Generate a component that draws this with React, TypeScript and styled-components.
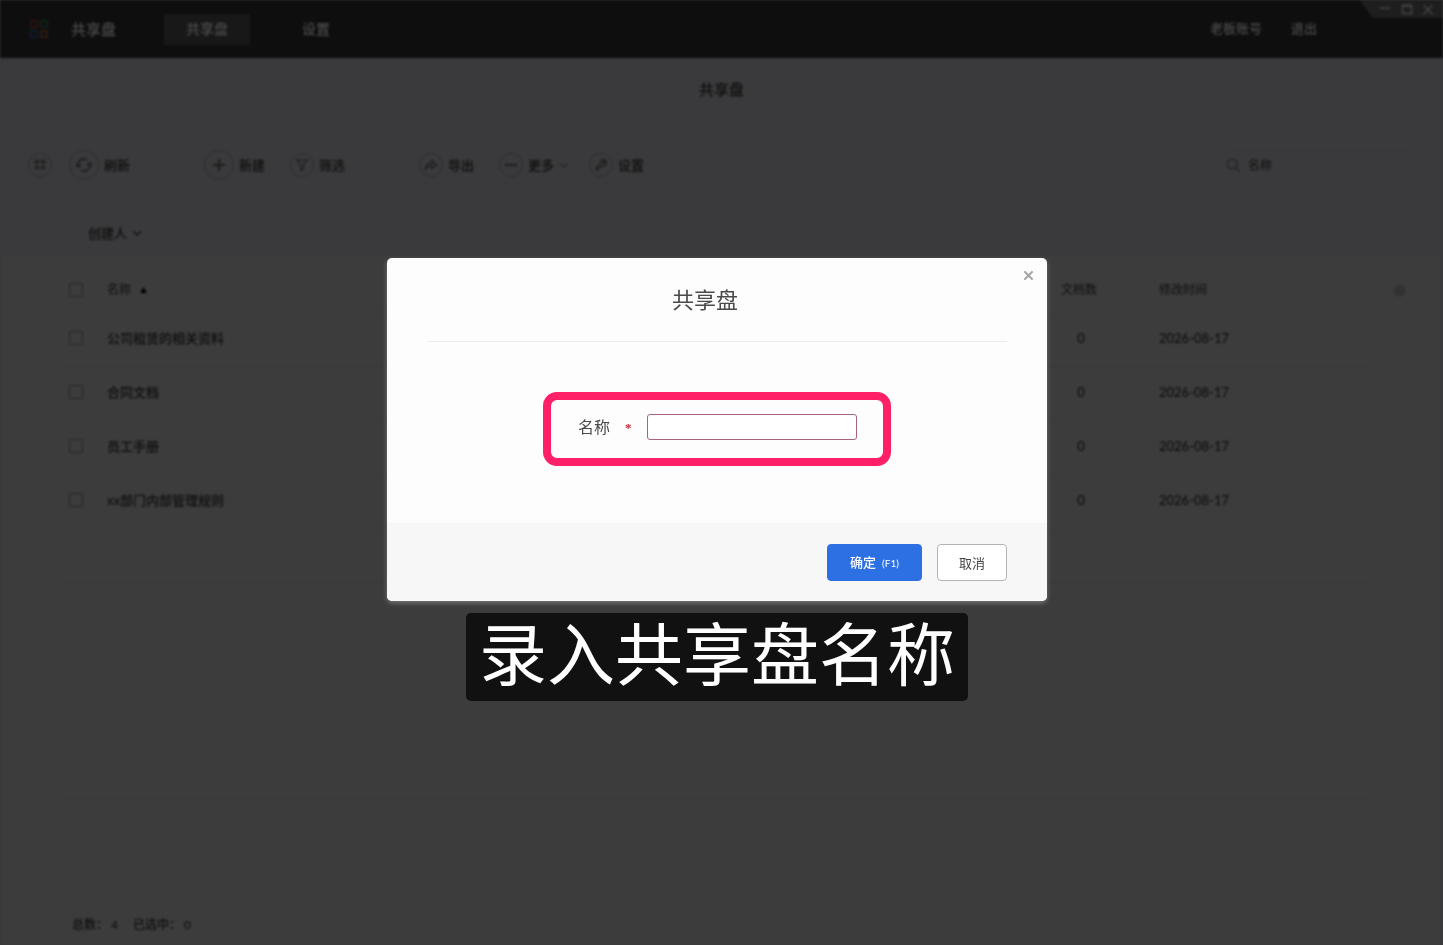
import React from "react";
import styled, { createGlobalStyle } from "styled-components";

const GlobalStyle = createGlobalStyle`
  *, *::before, *::after { box-sizing: border-box; }
  body {
    margin: 0;
    background: #3a3a3c;
    font-family: Lato, "Noto Sans CJK SC", sans-serif;
    font-size: 13px;
  }
  button, input { font: inherit; color: inherit; }
  button { margin: 0; padding: 0; border: 0; background: none; cursor: pointer; }
`;

const Page = styled.div`
  display: flex;
  flex-direction: column;
  min-height: 100vh;
  background: #3a3a3c;
  color: #0e0e0e;
  font-weight: 500;
  filter: blur(1px);
`;

const TopBar = styled.header`
  position: relative;
  display: flex;
  align-items: center;
  height: 58px;
  padding: 0 126px 0 30px;
  background: #0e0e0e;
  color: #4a4a4a;
`;

const Brand = styled.div`
  display: flex;
  align-items: center;
  gap: 23px;
  width: 134px;
  font-size: 15px;
  line-height: 20px;
`;

const Nav = styled.nav`
  display: flex;
  gap: 30px;
  flex: 1;
`;

const NavLink = styled.a<{ $active?: boolean }>`
  padding: 0 22px 1px;
  line-height: 30px;
  font-size: 14px;
  color: inherit;
  text-decoration: none;
  background: ${(p) => (p.$active ? "#181818" : "transparent")};
`;

const Account = styled.div`
  display: flex;
  gap: 29px;
  padding-bottom: 2px;
  line-height: 20px;
  a { color: inherit; text-decoration: none; }
`;

const WindowControls = styled.div`
  position: absolute;
  top: 0;
  right: 0;
  display: flex;
  align-items: center;
  justify-content: space-between;
  width: 84px;
  height: 18px;
  padding: 0 9px 0 20px;
  background: #1e1e1e;
  color: #444;
  clip-path: polygon(0 0, 100% 0, 100% 100%, 14px 100%);
  button { display: flex; }
`;

const PageTitle = styled.h1`
  margin: 0;
  padding-bottom: 2px;
  line-height: 62px;
  font-size: 15px;
  font-weight: 500;
  text-align: center;
`;

const Toolbar = styled.div`
  display: flex;
  align-items: center;
  gap: 74px;
  height: 86px;
  padding: 0 26px 0 28px;
`;

const ToolGroup = styled.div<{ $gap: number }>`
  display: flex;
  align-items: center;
  gap: ${(p) => p.$gap}px;
`;

const ToolButton = styled.button`
  display: flex;
  align-items: center;
  gap: 5px;
  line-height: 18px;
  white-space: nowrap;
`;

const Circle = styled.span<{ $large?: boolean }>`
  display: flex;
  align-items: center;
  justify-content: center;
  width: ${(p) => (p.$large ? 30 : 24)}px;
  height: ${(p) => (p.$large ? 30 : 24)}px;
  border: 1px solid #2c2c2c;
  border-radius: 50%;
  color: #1c1c1c;
`;

const Search = styled.label`
  display: flex;
  align-items: center;
  gap: 8px;
  width: 199px;
  height: 30px;
  margin-left: auto;
  padding: 0 7px;
  border: 1px solid #383838;
  border-radius: 15px;
  color: #222;
  input {
    flex: 1;
    min-width: 0;
    border: 0;
    padding: 0;
    outline: 0;
    background: none;
    font-size: 12px;
  }
  input::placeholder { color: #161616; opacity: 1; }
`;

const FilterBar = styled.div`
  display: flex;
  align-items: center;
  height: 48px;
  padding: 2px 88px 0;
`;

const Panel = styled.main`
  display: flex;
  flex: 1;
  flex-direction: column;
  margin: 0 3px;
  padding-top: 12px;
  background: #3c3c3c;
`;

const TableArea = styled.div`
  display: flex;
  align-items: flex-start;
  padding: 0 17px 0 61px;
`;

const Table = styled.table`
  flex: 1;
  table-layout: fixed;
  border-collapse: collapse;
  th, td {
    padding: 0;
    border-bottom: 1px solid #393939;
    text-align: left;
    font-weight: 500;
    line-height: 18px;
  }
  th { height: 44px; font-size: 12px; color: #161616; }
  td { height: 54px; padding-bottom: 2px; }
`;

const CheckCell = styled.col` width: 43px; `;
const CountCell = styled.col` width: 98px; `;
const DateCell = styled.col` width: 216px; `;

const Count = styled.span`
  display: block;
  width: 40px;
  text-align: center;
`;

const SortMark = styled.svg`
  margin-left: 9px;
  vertical-align: 1px;
`;

const Check = styled.input`
  display: block;
  width: 14px;
  height: 14px;
  margin: 0 0 0 5px;
  appearance: none;
  border: 1px solid #262626;
  border-radius: 1px;
`;

const GearButton = styled.button`
  display: flex;
  align-items: center;
  justify-content: center;
  width: 48px;
  height: 44px;
  color: #2a2a2a;
`;

const Divider = styled.div`
  height: 51px;
  margin: 0 65px 0 61px;
  border-bottom: 1px solid #393939;
`;

const StatusBar = styled.footer`
  display: flex;
  gap: 15px;
  padding: 0 69px;
  line-height: 42px;
  font-size: 12px;
`;

const Overlay = styled.div`
  position: fixed;
  inset: 0;
  display: flex;
  flex-direction: column;
  align-items: center;
  gap: 12px;
  padding: 258px 9px 0 0;
`;

const Dialog = styled.section`
  width: 660px;
  max-width: 100%;
  border-radius: 5px;
  overflow: hidden;
  background: #fdfdfd;
  color: #4a4a4a;
  box-shadow: 0 2px 5px rgba(255, 255, 255, 0.3);
`;

const DialogHeader = styled.header`
  display: flex;
  align-items: flex-start;
`;

const DialogTitle = styled.h2`
  flex: 1;
  margin: 0;
  line-height: 83px;
  font-size: 22px;
  font-weight: 400;
  text-align: center;
`;

const CloseButton = styled.button`
  display: flex;
  width: 24px;
  padding-top: 12px;
  color: #a2a2a2;
`;

const DialogBody = styled.form`
  display: flex;
  justify-content: center;
  margin: 0 40px;
  padding: 50px 0 57px;
  border-top: 1px solid #ebebeb;
`;

const Highlight = styled.div`
  display: flex;
  align-items: center;
  padding: 14px 26px 18px 27px;
  border: 8px solid #ff2068;
  border-radius: 14px;
  label { width: 47px; font-size: 16px; line-height: 26px; }
`;

const Required = styled.span`
  width: 22px;
  padding-top: 2px;
  color: #c02836;
  font: 700 13px/20px "Liberation Serif", serif;
`;

const NameInput = styled.input`
  width: 210px;
  height: 26px;
  padding: 0 6px;
  border: 1px solid #a8647c;
  border-radius: 3px;
  background: #fff;
  outline: 0;
`;

const DialogFooter = styled.footer`
  display: flex;
  justify-content: flex-end;
  gap: 15px;
  padding: 21px 40px 20px;
  background: #f7f7f7;
`;

const ActionButton = styled.button<{ $primary?: boolean }>`
  width: ${(p) => (p.$primary ? 95 : 70)}px;
  height: 37px;
  border: 1px solid ${(p) => (p.$primary ? "#2d70e4" : "#b4b4b4")};
  border-radius: 4px;
  background: ${(p) => (p.$primary ? "#2d70e4" : "#fff")};
  color: ${(p) => (p.$primary ? "#fff" : "#444")};
  font-weight: ${(p) => (p.$primary ? 500 : 400)};
  line-height: 18px;
  small { margin-left: 6px; font-weight: 400; font-size: 10px; }
`;

const Caption = styled.p`
  margin: 0;
  padding: 0 13px 12px;
  border-radius: 5px;
  background: #111;
  color: #fff;
  font-family: "Noto Sans CJK SC", sans-serif;
  font-size: 68px;
  line-height: 76px;
  white-space: nowrap;
`;

type IconProps = { size?: number; width?: number; children: React.ReactNode };
const Icon = ({ size = 16, width = 1.6, children }: IconProps) => (
  <svg width={size} height={size} viewBox="0 0 16 16" fill="none" stroke="currentColor" strokeWidth={width} aria-hidden="true">
    {children}
  </svg>
);

const Chevron = ({ faint }: { faint?: boolean }) => (
  <svg width="10" height="6" viewBox="0 0 10 6" fill="none" stroke={faint ? "#262626" : "#121212"} strokeWidth="1.3" aria-hidden="true">
    <path d="M1 1l4 4 4-4" />
  </svg>
);

const files = ["公司租赁的相关资料", "合同文档", "员工手册", "xx部门内部管理规则"];
const emptyRows = [0, 1, 2, 3, 4, 5];

export default function App() {
  return (
    <>
      <GlobalStyle />
      <Page>
        <TopBar>
          <Brand>
            <svg width="18" height="18" viewBox="0 0 18 18" fill="none" strokeWidth="1.5" aria-hidden="true">
              <rect x="1" y="1" width="6" height="6" stroke="#321412" />
              <rect x="11" y="1" width="6" height="6" stroke="#10281e" />
              <rect x="1" y="11" width="6" height="6" stroke="#121e34" />
              <rect x="11" y="11" width="6" height="6" stroke="#38200e" />
            </svg>
            <span>共享盘</span>
          </Brand>
          <Nav>
            <NavLink href="#disk" $active>共享盘</NavLink>
            <NavLink href="#settings">设置</NavLink>
          </Nav>
          <Account>
            <a href="#account">老板账号</a>
            <a href="#logout">退出</a>
          </Account>
          <WindowControls>
            <button aria-label="最小化"><Icon size={12} width={2}><path d="M1 7h14" /></Icon></button>
            <button aria-label="最大化"><Icon size={12} width={2}><path d="M2 3h12v11H2zM2 4h12" /></Icon></button>
            <button aria-label="关闭窗口"><Icon size={12} width={2}><path d="M2 3l12 12M14 3L2 15" /></Icon></button>
          </WindowControls>
        </TopBar>

        <PageTitle>共享盘</PageTitle>

        <Toolbar>
          <ToolGroup $gap={17}>
            <ToolButton aria-label="视图">
              <Circle>
                <Icon size={14} width={1.5}><path d="M4.500 1v13M11.500 1v13M1 4h14M1 11h14" /></Icon>
              </Circle>
            </ToolButton>
            <ToolButton>
              <Circle $large>
                <Icon><path d="M2 9a6 6 0 0 1 9-6.200M14 7a6 6 0 0 1-9 6.200" /><path d="M0 7l2 3 3-2M16 9l-2-3-3 2" /></Icon>
              </Circle>
              刷新
            </ToolButton>
          </ToolGroup>
          <ToolGroup $gap={25}>
            <ToolButton>
              <Circle $large><Icon width={2}><path d="M8 2v12M2 8h12" /></Icon></Circle>
              新建
            </ToolButton>
            <ToolButton>
              <Circle><Icon size={14} width={1.4}><path d="M2 2h12L9.500 8v6h-3V8z" /></Icon></Circle>
              筛选
            </ToolButton>
          </ToolGroup>
          <ToolGroup $gap={25}>
            <ToolButton>
              <Circle><Icon size={14} width={1.5}><path d="M1.500 13c0-5 3-7 7.500-7V3l5.500 5L9 12V9c-4 0-5.500 1-7.500 4z" /></Icon></Circle>
              导出
            </ToolButton>
            <ToolGroup $gap={20}>
              <ToolButton>
                <Circle><Icon size={14} width={2.6}><path d="M1 8h4M6 8h4M11 8h4" /></Icon></Circle>
                更多
                <Chevron faint />
              </ToolButton>
              <ToolButton>
                <Circle><Icon size={14} width={1.5}><path d="M13 2.500a4 4 0 0 0-6 4.500L2 12l2 2 5-5a4 4 0 0 0 5-5l-3 2-1-1z" /></Icon></Circle>
                设置
              </ToolButton>
            </ToolGroup>
          </ToolGroup>
          <Search>
            <Icon size={14} width={1.5}><circle cx="7" cy="7" r="5.500" /><path d="M11 11l4.500 4.500" /></Icon>
            <input type="search" placeholder="名称" aria-label="搜索名称" />
          </Search>
        </Toolbar>

        <FilterBar>
          <ToolButton>创建人<Chevron /></ToolButton>
        </FilterBar>

        <Panel>
          <TableArea>
            <Table>
              <colgroup><CheckCell /><col /><CountCell /><DateCell /></colgroup>
              <thead>
                <tr>
                  <th><Check type="checkbox" aria-label="全选" /></th>
                  <th>
                    名称
                    <SortMark width="7" height="6" viewBox="0 0 8 7" aria-hidden="true"><path d="M4 0l4 7H0z" fill="#000" /></SortMark>
                  </th>
                  <th>文档数</th>
                  <th>修改时间</th>
                </tr>
              </thead>
              <tbody>
                {files.map((name) => (
                  <tr key={name}>
                    <td><Check type="checkbox" aria-label={name} /></td>
                    <td>{name}</td>
                    <td><Count>0</Count></td>
                    <td>2026-08-17</td>
                  </tr>
                ))}
                {emptyRows.map((n) => (
                  <tr key={n}><td /><td /><td /><td /></tr>
                ))}
              </tbody>
            </Table>
            <GearButton aria-label="列设置">
              <Icon size={13} width={1.6}><circle cx="8" cy="8" r="6" /><circle cx="8" cy="8" r="2.500" /></Icon>
            </GearButton>
          </TableArea>
          <Divider />
          <StatusBar>
            <span>总数： 4</span>
            <span>已选中： 0</span>
          </StatusBar>
        </Panel>
      </Page>

      <Overlay>
        <Dialog role="dialog" aria-labelledby="dialog-title">
          <DialogHeader>
            <DialogTitle id="dialog-title">共享盘</DialogTitle>
            <CloseButton aria-label="关闭">
              <Icon size={11} width={3}><path d="M2 2l12 12M14 2L2 14" /></Icon>
            </CloseButton>
          </DialogHeader>
          <DialogBody>
            <Highlight>
              <label htmlFor="disk-name">名称</label>
              <Required>*</Required>
              <NameInput id="disk-name" type="text" required />
            </Highlight>
          </DialogBody>
          <DialogFooter>
            <ActionButton $primary>确定<small>(F1)</small></ActionButton>
            <ActionButton>取消</ActionButton>
          </DialogFooter>
        </Dialog>
        <Caption>录入共享盘名称</Caption>
      </Overlay>
    </>
  );
}
